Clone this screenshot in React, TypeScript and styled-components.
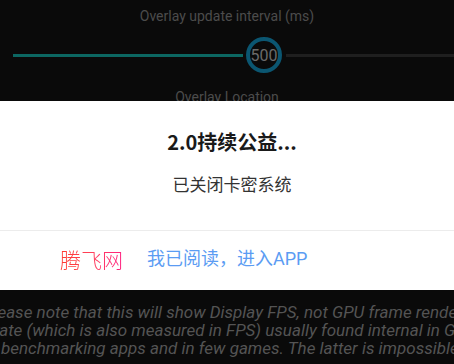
import React from 'react';
import styled, { createGlobalStyle } from 'styled-components';

const GlobalStyle = createGlobalStyle`
  html, body {
    margin: 0;
    padding: 0;
    background: #0a0a0a;
  }
  body {
    width: 454px;
    height: 364px;
    overflow: hidden;
    font-family: Roboto, "Noto Sans CJK SC", sans-serif;
  }
`;

const Screen = styled.div`
  display: flex;
  flex-direction: column;
  width: 454px;
  height: 364px;
  background: #0a0a0a;
  overflow: hidden;
`;

const TopPane = styled.div`
  display: flex;
  flex-direction: column;
  align-items: center;
  height: 101px;
  overflow: hidden;
  flex-shrink: 0;
`;

const Label = styled.div<{ $top: number }>`
  margin-top: ${(p) => p.$top}px;
  font-family: Roboto, sans-serif;
  font-size: 14px;
  line-height: 16px;
  color: #4c4c4c;
  flex-shrink: 0;
`;

const SliderRow = styled.div`
  display: flex;
  align-items: center;
  width: 100%;
  height: 36px;
  margin-top: 13px;
  padding-left: 13px;
  box-sizing: border-box;
  flex-shrink: 0;
`;

const Track = styled.div<{ $active?: boolean; $width?: number }>`
  height: 3px;
  background: ${(p) => (p.$active ? '#0c6762' : '#1f1f1f')};
  ${(p) => (p.$width ? `width: ${p.$width}px;` : 'flex: 1;')}
`;

const Thumb = styled.div`
  display: flex;
  align-items: center;
  justify-content: center;
  width: 36px;
  height: 36px;
  box-sizing: border-box;
  border-radius: 50%;
  border: 4px solid #0b5671;
  margin: 0 4px 0 3px;
  font-family: Roboto, sans-serif;
  font-size: 16px;
  color: #6b6b6b;
`;

const Dialog = styled.div`
  display: flex;
  flex-direction: column;
  height: 189px;
  background: #ffffff;
  flex-shrink: 0;
`;

const Body = styled.div`
  display: flex;
  flex-direction: column;
  align-items: center;
  height: 130px;
  border-bottom: 1.5px solid #ececec;
  box-sizing: border-box;
`;

const Title = styled.div`
  margin-top: 27px;
  font-family: "Noto Sans CJK SC", sans-serif;
  font-weight: 700;
  font-size: 20px;
  line-height: 28px;
  color: #1a1a1a;
  padding-left: 10px;
`;

const Message = styled.div`
  margin-top: 16px;
  font-family: "Noto Sans CJK SC", sans-serif;
  font-size: 17px;
  line-height: 24px;
  color: #333333;
  padding-left: 10px;
`;

const Actions = styled.div`
  display: flex;
  align-items: center;
  height: 56px;
  padding-left: 60px;
  gap: 24px;
`;

const BrandButton = styled.span`
  font-family: "Noto Sans CJK SC", serif;
  font-weight: 300;
  font-size: 21px;
  line-height: 28px;
  background: linear-gradient(90deg, #ff3a2e 0%, #ff4060 55%, #ff1f80 100%);
  -webkit-background-clip: text;
  background-clip: text;
  color: transparent;
`;

const EnterButton = styled.span`
  font-family: Roboto, "Noto Sans CJK SC", sans-serif;
  font-size: 18px;
  line-height: 28px;
  color: #5b9cf3;
`;

const BottomPane = styled.div`
  flex: 1;
  overflow: hidden;
  padding-top: 13px;
`;

const NoteLine = styled.div<{ $indent: number }>`
  margin-left: ${(p) => p.$indent}px;
  white-space: nowrap;
  font-family: Roboto, sans-serif;
  font-style: italic;
  font-size: 17px;
  line-height: 18px;
  color: #545454;
`;

const lines: { text: string; indent: number }[] = [
  { text: 'Please note that this will show Display FPS, not GPU frame rendering', indent: -17 },
  { text: 'rate (which is also measured in FPS) usually found internal in GPU', indent: -6 },
  { text: 'benchmarking apps and in few games. The latter is impossible to get', indent: 1 },
];

export default function App() {
  return (
    <Screen>
      <GlobalStyle />
      <TopPane>
        <Label $top={8}>Overlay update interval (ms)</Label>
        <SliderRow>
          <Track $active $width={230} />
          <Thumb>500</Thumb>
          <Track />
        </SliderRow>
        <Label $top={16}>Overlay Location</Label>
      </TopPane>
      <Dialog>
        <Body>
          <Title>2.0持续公益...</Title>
          <Message>已关闭卡密系统</Message>
        </Body>
        <Actions>
          <BrandButton>腾飞网</BrandButton>
          <EnterButton>我已阅读，进入APP</EnterButton>
        </Actions>
      </Dialog>
      <BottomPane>
        {lines.map((l) => (
          <NoteLine key={l.text} $indent={l.indent}>
            {l.text}
          </NoteLine>
        ))}
      </BottomPane>
    </Screen>
  );
}
